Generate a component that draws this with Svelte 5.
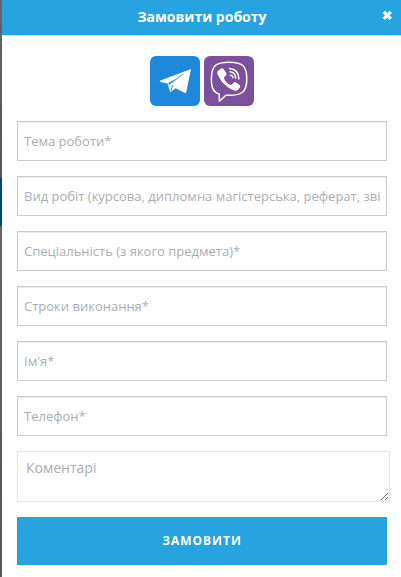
<script>
	const fields = [
		{ name: 'topic', placeholder: 'Тема роботи*' },
		{ name: 'type', placeholder: 'Вид робіт (курсова, дипломна магістерська, реферат, звіт)*' },
		{ name: 'subject', placeholder: 'Спеціальність (з якого предмета)*' },
		{ name: 'deadline', placeholder: 'Строки виконання*' },
		{ name: 'name', placeholder: "Ім'я*" },
		{ name: 'phone', placeholder: 'Телефон*' },
	];

	let order = $state({ comment: '' });
	let { onclose = () => {} } = $props();

	function submit(event) {
		event.preventDefault();
	}
</script>

<div class="page">
	<div class="modal">
		<header class="header">
			<h1>Замовити роботу</h1>
			<button class="close" type="button" aria-label="Закрити" onclick={onclose}>
				<svg width="11" height="11" viewBox="0 0 11 11">
					<path d="M1.8 1.8 8.8 8.8M8.8 1.8 1.8 8.8" stroke="#fff" stroke-width="3.3" />
				</svg>
			</button>
		</header>

		<div class="body">
			<div class="messengers">
				<svg width="50" height="50" viewBox="0 0 50 50">
					<rect width="50" height="50" rx="6" fill="#1e88da" />
					<path d="M41 13 9.8 24.8Q9.6 25.6 10.5 26L17.7 27.4 20.2 36.3 25.8 32.3 35.2 37.3 36.2 36.4Z" fill="#fff" />
					<path d="M18.3 27.3Q26 23.7 33.2 18.1L19.4 28.6Z" fill="#1e88da" stroke="#1e88da" stroke-width="0.5" />
					<path d="M22.5 29.2 21 35" fill="none" stroke="#1e88da" stroke-width="1" />
				</svg>
				<svg width="50" height="50" viewBox="0 0 50 50">
					<rect width="50" height="50" rx="6" fill="#7b519d" />
					<path
						d="M25 6.2C12 6.2 7.4 9.5 7.4 22.8C7.4 32.5 9.5 36.2 15.3 38.1V45.3L22 39.2C37.5 39.7 42.8 37 42.8 22.8C42.8 9.5 38 6.2 25 6.2Z"
						fill="none" stroke="#fff" stroke-width="1.5" stroke-linejoin="round"
					/>
					<path
						d="M14.1 14.8 17.3 12.5Q18.5 11.8 19.5 12.9L22.3 17Q23 18.3 22 19.2L20.4 20.7Q19.7 21.5 20.3 22.9Q22.2 27.2 26.3 28.8Q27.5 29.3 28.2 28.3L29.8 26.4Q30.5 25.7 31.6 26.2L35.5 29Q36.8 30 36 31.4L34 33.8Q32.4 35.4 30.2 34.6C22 31.2 16.5 25.5 13.4 17.7Q12.8 16 14.1 14.8Z"
						fill="#fff"
					/>
					<path
						d="M25.4 12.5Q34.6 13.1 34.9 23M26 15.8Q31.4 16.3 31.7 22M26.4 19.2Q28.8 19.3 29 21.8"
						fill="none" stroke="#fff" stroke-width="1.5" stroke-linecap="round"
					/>
				</svg>
			</div>

			<form onsubmit={submit}>
				{#each fields as field}
					<input type="text" name={field.name} placeholder={field.placeholder} bind:value={order[field.name]}>
				{/each}
				<textarea name="comment" placeholder="Коментарі" bind:value={order.comment}></textarea>
				<button class="submit" type="submit">Замовити</button>
			</form>
		</div>
	</div>
</div>

<style>
	:global(body) {
		background: #fff;
	}

	.page {
		box-sizing: border-box;
		height: 577px;
		padding-left: 2px;
		overflow: hidden;
		font-family: "Open Sans", sans-serif;
		/* dimmed page showing beside the modal */
		background: linear-gradient(#666 0, #555 178px, #004b70 178px, #004b70 226px, #666 226px, #555 100%);
	}

	.modal {
		height: 100%;
		background: #fff;
	}

	.header {
		display: grid;
		grid-template-columns: 30px 1fr 30px;
		align-items: center;
		box-sizing: border-box;
		height: 36px;
		border-bottom: 1px solid #d5dde1;
		background: #27a3df;
	}

	h1 {
		grid-column: 2;
		margin: 0 0 2px 1px;
		color: #fff;
		font-size: 14px;
		font-weight: 700;
		line-height: 20px;
		text-align: center;
	}

	.close {
		display: flex;
		margin: 0 0 4px 11px;
		padding: 0;
		border: 0;
		background: none;
	}

	.body {
		padding: 20px 14px 0 15px;
	}

	.messengers {
		display: flex;
		justify-content: center;
		gap: 4px;
		height: 50px;
		padding-right: 1px;
	}

	form {
		display: flex;
		flex-direction: column;
		gap: 15px;
		width: 370px;
		margin-top: 15px;
	}

	input {
		box-sizing: border-box;
		width: 100%;
		height: 40px;
		padding: 0 6px;
		border: 1px solid #ccc;
		border-radius: 0;
		outline: 0;
		box-shadow: inset 0 1px 1px rgba(0, 0, 0, 0.075);
		font: 13px "Open Sans", sans-serif;
	}

	textarea {
		box-sizing: border-box;
		width: 373px;
		height: 51px;
		padding: 6px 8px;
		border: 1px solid #e5e5e5;
		outline: 0;
		resize: both;
		font: 14px/20px "Open Sans", sans-serif;
	}

	input::placeholder, textarea::placeholder {
		color: #aaafb4;
		opacity: 1;
	}

	.submit {
		height: 48px;
		padding: 0 0 2px;
		border: 0;
		background: #27a3df;
		color: #fff;
		font: 700 12px "Open Sans", sans-serif;
		letter-spacing: 1px;
		text-transform: uppercase;
	}
</style>
